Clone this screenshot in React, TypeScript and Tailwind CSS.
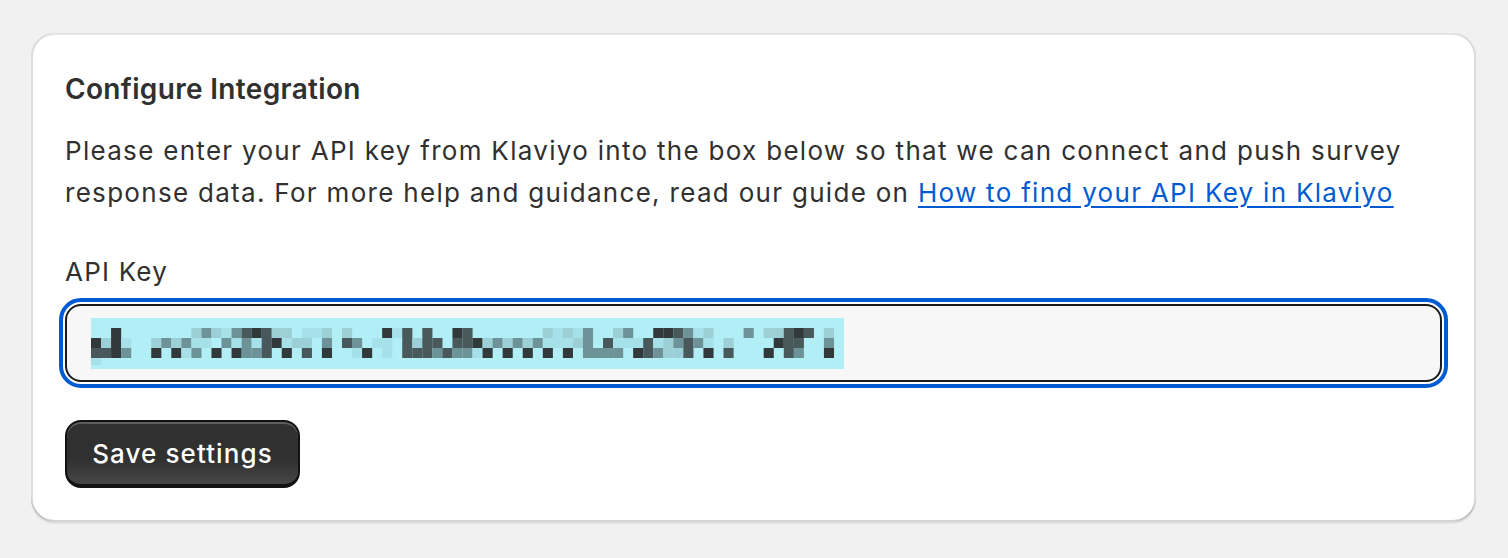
import React from "react";

// pixelated (redacted) api key, 3 rows of 10px blocks + a faint tail
const keyRows = [
    "..e.......bcbacdedbb.aab.b...ead.d..ed.......babac..bc..eedcab...c.bbded.b.",
    "ebea..bcbcaa.cacadeabb.c.dc.aa.dbdd.ddebcbcbcaaabc.daaadabcdca.b....edd..c.",
    "ddec..e.eac.e.eccd.e.d.e..ae.a.dddcdccae.e.e.e.e.cccc.edcbbd.e.d...e.dc..e.",
    "a..........................................................................",
];

const shades: Record<string, string> = {
    a: "#a6e0e8",
    b: "#9ccfd6",
    c: "#6d9398",
    d: "#48585b",
    e: "#32393b",
};

function RedactedKey() {
    return (
        <svg width="753" height="51" viewBox="0 0 753 51" className="block">
            <rect x="0" y="0" width="753" height="51" fill="#b2eef5" />
            {keyRows.map((row, r) =>
                row.split("").map((ch, c) =>
                    shades[ch] ? (
                        <rect
                            key={`${r}-${c}`}
                            x={c * 10.04}
                            y={10 + r * 10}
                            width={10.1}
                            height={r === 3 ? 7 : 10}
                            fill={shades[ch]}
                        />
                    ) : null
                )
            )}
        </svg>
    );
}

export default function App() {
    return (
        <div
            className="min-h-[558px] w-full bg-[#f1f1f1] pt-[33px] pl-[31px]"
            style={{ fontFamily: "Inter, 'Noto Sans', sans-serif" }}
        >
            <div className="w-[1445px] rounded-[24px] bg-white px-[34px] pt-[36px] pb-[34px] text-[#303030] shadow-[0_2px_0_0_rgba(26,26,26,0.07),inset_0_2px_0_0_rgba(204,204,204,0.5),inset_0_-2px_0_0_rgba(0,0,0,0.17),inset_-2px_0_0_0_rgba(0,0,0,0.13),inset_2px_0_0_0_rgba(0,0,0,0.13)]">
                <h2 className="text-[28px] font-semibold leading-[40px] tracking-[0.33px]">
                    Configure Integration
                </h2>

                <p className="mt-[21px] text-[26px] leading-[42px] tracking-[1.3px]">
                    Please enter your API key from Klaviyo into the box below so that we can connect and push survey
                    <br />
                    response data. For more help and guidance, read our guide on{" "}
                    <a href="#" className="text-[#005bd3] underline underline-offset-[4px]">
                        How to find your API Key in Klaviyo
                    </a>
                </p>

                <label className="mt-[37px] block text-[26px] leading-[42px] tracking-[1.2px]">API Key</label>

                <div className="mt-[11px] flex h-[78px] items-center rounded-[16px] border-2 border-[#1a1a1a] bg-[#f7f7f7] pl-[24px] outline-4 outline-offset-2 outline-[#005bd3]">
                    <RedactedKey />
                </div>

                <button className="mt-[38px] flex h-[68px] w-[235px] items-center justify-center rounded-[16px] border-2 border-b-[4px] border-[#121212] bg-[linear-gradient(180deg,#303030_60%,#474747_100%)] text-[26px] font-medium tracking-[1.1px] text-white shadow-[inset_0_2px_0_0_rgba(255,255,255,0.22)]">
                    Save settings
                </button>
            </div>
        </div>
    );
}
